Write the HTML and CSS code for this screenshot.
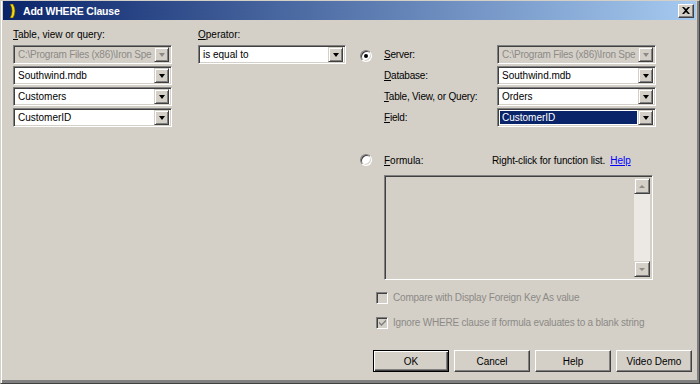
FILE: index.html
```html
<!DOCTYPE html>
<html lang="en">
<head>
    <meta charset="UTF-8">
    <title>Add WHERE Clause</title>
    <link rel="stylesheet" href="styles.css">
</head>
<body>
    <div class="dialog">
        <div class="titlebar">
            <svg class="app-icon" width="8" height="14" viewBox="0 0 8 14">
                <path d="M1 0 L4 0 Q8 7 4 14 L1 14 Q5 7 1 0 Z" fill="#f5d90a" stroke="#5a4a00" stroke-width="0.6"/>
            </svg>
            <span class="title">Add WHERE Clause</span>
            <button class="close-btn">
                <svg width="8" height="7" viewBox="0 0 8 7">
                    <path d="M0 0 L2 0 L4 2 L6 0 L8 0 L5 3.5 L8 7 L6 7 L4 5 L2 7 L0 7 L3 3.5 Z" fill="#000"/>
                </svg>
            </button>
        </div>

        <div class="content">
            <div class="columns">
                <div class="col-source">
                    <p class="label"><u>T</u>able, view or query:</p>
                    <div class="combo-list">
                        <div class="combo disabled"><span class="combo-text">C:\Program Files (x86)\Iron Spe</span><span class="drop"></span></div>
                        <div class="combo"><span class="combo-text">Southwind.mdb</span><span class="drop"></span></div>
                        <div class="combo"><span class="combo-text">Customers</span><span class="drop"></span></div>
                        <div class="combo"><span class="combo-text">CustomerID</span><span class="drop"></span></div>
                    </div>
                </div>

                <div class="col-operator">
                    <p class="label"><u>O</u>perator:</p>
                    <div class="combo"><span class="combo-text">is equal to</span><span class="drop"></span></div>
                </div>

                <div class="col-target">
                    <div class="option-row">
                        <span class="radio checked"></span>
                        <div class="field-grid">
                            <span class="field-label"><u>S</u>erver:</span>
                            <div class="combo disabled"><span class="combo-text">C:\Program Files (x86)\Iron Spe</span><span class="drop"></span></div>
                            <span class="field-label"><u>D</u>atabase:</span>
                            <div class="combo"><span class="combo-text">Southwind.mdb</span><span class="drop"></span></div>
                            <span class="field-label"><u>T</u>able, View, or Query:</span>
                            <div class="combo"><span class="combo-text">Orders</span><span class="drop"></span></div>
                            <span class="field-label"><u>F</u>ield:</span>
                            <div class="combo"><span class="combo-text selected">CustomerID</span><span class="drop"></span></div>
                        </div>
                    </div>

                    <div class="formula-row">
                        <span class="radio"></span>
                        <span class="formula-label"><u>F</u>ormula:</span>
                        <span class="hint">Right-click for function list.</span>
                        <a class="help-link" href="#">Help</a>
                    </div>

                    <div class="formula-box">
                        <div class="formula-text"></div>
                        <div class="scrollbar">
                            <span class="scroll-btn"><span class="arrow-up"></span></span>
                            <span class="scroll-track"></span>
                            <span class="scroll-btn"><span class="arrow-down"></span></span>
                        </div>
                    </div>

                    <div class="checks">
                        <label class="check"><span class="box"></span>Compare with Display Foreign Key As value</label>
                        <label class="check"><span class="box ticked">
                            <svg width="7" height="7" viewBox="0 0 7 7"><path d="M0 2.5 L2.5 5 L7 0.5 L7 2.5 L2.5 7 L0 4.5 Z" fill="#808080"/></svg>
                        </span>Ignore WHERE clause if formula evaluates to a blank string</label>
                    </div>
                </div>
            </div>

            <div class="buttons">
                <button class="btn default">OK</button>
                <button class="btn">Cancel</button>
                <button class="btn">Help</button>
                <button class="btn">Video Demo</button>
            </div>
        </div>
    </div>
</body>
</html>
```

FILE: styles.css
```css
*{
    box-sizing: border-box;
}
body{
    margin: 0;
    background-color: #d4d0c8;
    font-family: "Liberation Sans", Arial, sans-serif;
    font-size: 10px;
    color: #000;
}
p{
    margin: 0;
}
.dialog{
    width: 700px;
    height: 384px;
    background-color: #d4d0c8;
    border-left: 1px solid #d4d0c8;
    border-top: 1px solid #d4d0c8;
    border-right: 1px solid #404040;
    border-bottom: 1px solid #404040;
    box-shadow: inset 1px 0 #fff, inset -2px -3px #808080;
    display: flex;
    flex-direction: column;
}
.titlebar{
    height: 19px;
    margin: 0 3px 0 2px;
    background: linear-gradient(to right, #0a246a, #a6caf0);
    display: flex;
    align-items: center;
    padding-left: 6px;
}
.app-icon{
    margin-right: 6px;
}
.title{
    color: #fff;
    font-weight: bold;
    font-size: 10.5px;
    letter-spacing: -0.2px;
}
.close-btn{
    margin-left: auto;
    margin-right: 2px;
    width: 16px;
    height: 14px;
    padding: 0;
    background-color: #d4d0c8;
    border: 1px solid;
    border-color: #fff #404040 #404040 #fff;
    box-shadow: inset -1px -1px #808080;
    display: flex;
    align-items: center;
    justify-content: center;
}
.content{
    flex: 1;
    display: flex;
    flex-direction: column;
    padding: 9px 7px 11px 12px;
}
.columns{
    display: flex;
    flex: 1;
}
.label{
    height: 16px;
    line-height: 12px;
    color: #000;
}
.col-source{
    width: 159px;
}
.combo-list{
    display: flex;
    flex-direction: column;
    gap: 2px;
}
.col-operator{
    width: 148px;
    margin-left: 26px;
}
.combo{
    height: 19px;
    background-color: #fff;
    border: 1px solid;
    border-color: #808080 #fff #fff #808080;
    box-shadow: inset 1px 1px #404040, inset -1px -1px #d4d0c8;
    display: flex;
    align-items: center;
    padding: 2px;
}
.combo-text{
    flex: 1;
    min-width: 0;
    white-space: nowrap;
    overflow: hidden;
    padding-left: 2px;
    line-height: 13px;
    height: 13px;
    margin-right: 1px;
}
.combo-text.selected{
    background-color: #0a246a;
    color: #fff;
}
.combo.disabled{
    background-color: #d4d0c8;
    color: #8c8a86;
}
.combo.disabled .combo-text{
    letter-spacing: -0.25px;
}
.drop{
    width: 15px;
    height: 15px;
    flex-shrink: 0;
    background-color: #d4d0c8;
    border: 1px solid;
    border-color: #d4d0c8 #404040 #404040 #d4d0c8;
    box-shadow: inset 1px 1px #fff, inset -1px -1px #808080;
    display: flex;
    align-items: center;
    justify-content: center;
}
.drop::after{
    content: "";
    border-left: 3.5px solid transparent;
    border-right: 3.5px solid transparent;
    border-top: 4px solid #000;
}
.disabled .drop::after{
    border-top-color: #8c8a86;
}
.col-target{
    margin-left: 14px;
    width: 300px;
}
.option-row{
    display: flex;
    margin-top: 16px;
}
.radio{
    width: 12px;
    height: 12px;
    border-radius: 50%;
    background-color: #fff;
    border: 1px solid;
    border-color: #808080 #fff #fff #808080;
    box-shadow: inset 1px 1px #404040, inset -1px -1px #d4d0c8;
    display: flex;
    align-items: center;
    justify-content: center;
    flex-shrink: 0;
}
.option-row .radio{
    margin-top: 5px;
}
.radio.checked::after{
    content: "";
    width: 4px;
    height: 4px;
    border-radius: 50%;
    background-color: #000;
}
.field-grid{
    margin-left: 12px;
    display: grid;
    grid-template-columns: 113px 159px;
    row-gap: 2px;
    align-items: center;
}
.field-label{
    white-space: nowrap;
    letter-spacing: -0.2px;
}
.formula-row{
    display: flex;
    align-items: center;
    margin-top: 27px;
    height: 12px;
}
.formula-label{
    margin-left: 12px;
    width: 108px;
}
.hint{
    margin-right: 5px;
    letter-spacing: -0.1px;
}
.help-link{
    color: #0000ff;
    text-decoration: underline;
}
.formula-box{
    margin: 9px 0 0 24px;
    width: 269px;
    height: 105px;
    background-color: #d4d0c8;
    border: 1px solid;
    border-color: #808080 #fff #fff #808080;
    box-shadow: inset 1px 1px #404040, inset -1px -1px #d4d0c8;
    display: flex;
    padding: 2px;
}
.formula-text{
    flex: 1;
}
.scrollbar{
    width: 16px;
    display: flex;
    flex-direction: column;
    background-color: #ece9e4;
}
.scroll-track{
    flex: 1;
}
.scroll-btn{
    height: 16px;
    background-color: #d4d0c8;
    border: 1px solid;
    border-color: #d4d0c8 #404040 #404040 #d4d0c8;
    box-shadow: inset 1px 1px #fff, inset -1px -1px #808080;
    display: flex;
    align-items: center;
    justify-content: center;
}
.arrow-up{
    border-left: 3px solid transparent;
    border-right: 3px solid transparent;
    border-bottom: 3px solid #8c8a86;
}
.arrow-down{
    border-left: 3px solid transparent;
    border-right: 3px solid transparent;
    border-top: 3px solid #8c8a86;
}
.checks{
    margin: 11px 0 0 16px;
    display: flex;
    flex-direction: column;
    gap: 12px;
}
.check{
    display: flex;
    align-items: center;
    color: #8c8a86;
    height: 13px;
    white-space: nowrap;
    letter-spacing: -0.2px;
}
.box{
    width: 12px;
    height: 12px;
    margin-right: 5px;
    background-color: #d4d0c8;
    border: 1px solid;
    border-color: #808080 #fff #fff #808080;
    box-shadow: inset 1px 1px #404040, inset -1px -1px #d4d0c8;
    display: flex;
    align-items: center;
    justify-content: center;
}
.buttons{
    display: flex;
    justify-content: flex-end;
    gap: 5px;
}
.btn{
    width: 76px;
    height: 22px;
    padding: 0;
    font-family: "Liberation Sans", Arial, sans-serif;
    font-size: 10px;
    color: #000;
    background-color: #d4d0c8;
    border: 1px solid;
    border-color: #fff #404040 #404040 #fff;
    box-shadow: inset -1px -1px #808080;
}
.btn.default{
    border: 1px solid #000;
    box-shadow: inset 1px 1px #fff, inset -1px -1px #404040, inset -2px -2px #808080;
}
```
